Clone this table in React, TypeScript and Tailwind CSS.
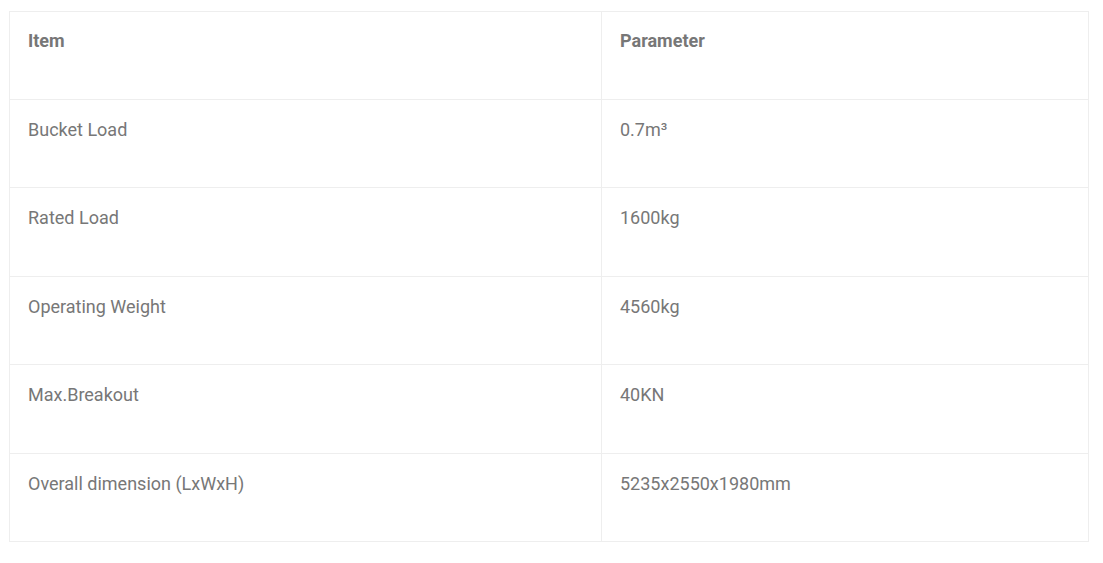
const rows: [string, string][] = [
  ["Bucket Load", "0.7m³"],
  ["Rated Load", "1600kg"],
  ["Operating Weight", "4560kg"],
  ["Max.Breakout", "40KN"],
  ["Overall dimension (LxWxH)", "5235x2550x1980mm"],
];

export default function App() {
  return (
    <div className="bg-white min-h-screen pt-[11px] pl-[9px] font-['Roboto',sans-serif] text-[18px] leading-[27px] text-[#777]">
      <table className="w-[1080px] border-collapse border border-[#eee]">
        <thead>
          <tr className="h-[88px]">
            <th className="w-[592px] border border-[#eee] px-[18px] pt-[15px] align-top text-left font-bold text-[#777]">
              Item
            </th>
            <th className="border border-[#eee] px-[18px] pt-[15px] align-top text-left font-bold text-[#777]">
              Parameter
            </th>
          </tr>
        </thead>
        <tbody>
          {rows.map(([item, value]) => (
            <tr key={item} className="h-[88.4px]">
              <td className="border border-[#eee] px-[18px] pt-[16px] align-top">{item}</td>
              <td className="border border-[#eee] px-[18px] pt-[16px] align-top">{value}</td>
            </tr>
          ))}
        </tbody>
      </table>
    </div>
  );
}
